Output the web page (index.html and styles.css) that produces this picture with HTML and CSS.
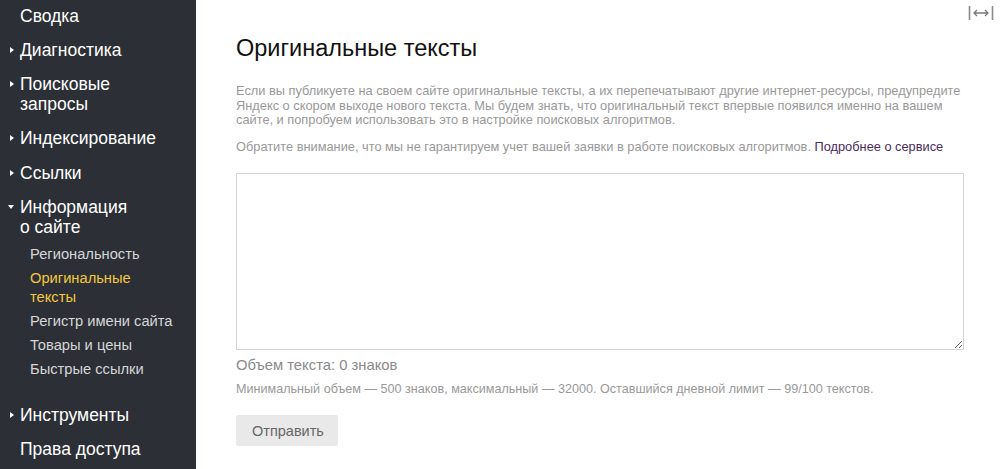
FILE: index.html
```html
<!DOCTYPE html>
<html lang="ru">
<head>
    <meta charset="UTF-8">
    <title>Оригинальные тексты</title>
    <link rel="stylesheet" href="styles.css">
</head>
<body>

    <nav class="sidebar">
        <ul class="menu">
            <li class="menu-item menu-item-first">Сводка</li>
            <li class="menu-item has-arrow">Диагностика</li>
            <li class="menu-item has-arrow">Поисковые<br>запросы</li>
            <li class="menu-item has-arrow">Индексирование</li>
            <li class="menu-item has-arrow">Ссылки</li>
            <li class="menu-item has-arrow open">Информация<br>о сайте</li>
            <li class="submenu">
                <ul>
                    <li>Региональность</li>
                    <li class="active">Оригинальные<br>тексты</li>
                    <li>Регистр имени сайта</li>
                    <li>Товары и цены</li>
                    <li>Быстрые ссылки</li>
                </ul>
            </li>
            <li class="menu-item has-arrow menu-item-tools">Инструменты</li>
            <li class="menu-item">Права доступа</li>
        </ul>
    </nav>

    <main class="content">
        <div class="expand" title="Развернуть">
            <svg width="26" height="16" viewBox="0 0 26 16">
                <path d="M1.5 1v14M24.5 1v14" stroke="#8a8a8a" stroke-width="1.6" fill="none"/>
                <path d="M6 8h14M9 5l-3 3 3 3M17 5l3 3-3 3" stroke="#7a7a7a" stroke-width="1.3" fill="none"/>
            </svg>
        </div>

        <h1>Оригинальные тексты</h1>

        <p class="intro">Если вы публикуете на своем сайте оригинальные тексты, а их перепечатывают другие интернет-ресурсы, предупредите Яндекс о скором выходе нового текста. Мы будем знать, что оригинальный текст впервые появился именно на вашем сайте, и попробуем использовать это в настройке поисковых алгоритмов.</p>

        <p class="intro">Обратите внимание, что мы не гарантируем учет вашей заявки в работе поисковых алгоритмов. <a href="#">Подробнее о сервисе</a></p>

        <textarea class="text-input"></textarea>

        <p class="counter">Объем текста: 0 знаков</p>
        <p class="limits">Минимальный объем — 500 знаков, максимальный — 32000. Оставшийся дневной лимит — 99/100 текстов.</p>

        <button class="submit">Отправить</button>
    </main>

</body>
</html>
```

FILE: styles.css
```css
body {
    font-family: 'Liberation Sans', Arial, sans-serif;
    margin: 0;
    display: flex;
    min-height: 100vh;
    background: #fff;
    overflow: hidden;
}

.sidebar {
    width: 196px;
    flex-shrink: 0;
    background: #2c2f35;
    color: #fff;
}

.menu {
    list-style: none;
    margin: 0;
    padding: 0;
}

.menu-item {
    position: relative;
    font-size: 17.5px;
    line-height: 20px;
    padding: 7px 10px 7.3px 20px;
}

.menu-item-first {
    padding-top: 5.5px;
}

.has-arrow::before {
    content: "";
    position: absolute;
    left: 10px;
    top: 14px;
    border-left: 4px solid #fff;
    border-top: 3px solid transparent;
    border-bottom: 3px solid transparent;
}

.has-arrow.open::before {
    left: 8px;
    top: 15px;
    border-top: 4px solid #fff;
    border-left: 3px solid transparent;
    border-right: 3px solid transparent;
    border-bottom: none;
}

.menu-item-tools {
    margin-top: 17px;
}

.submenu ul {
    list-style: none;
    margin: -2.5px 0 0;
    padding: 0 0 0 30px;
}

.submenu li {
    font-size: 14.7px;
    line-height: 19px;
    padding: 3px 0 2px;
    color: #d6d6d6;
}

.submenu li.active {
    color: #f3c83c;
}

.content {
    position: relative;
    flex: 1;
    padding: 0 36px 0 40px;
}

.expand {
    position: absolute;
    top: 5px;
    right: 6px;
    height: 16px;
}

h1 {
    font-size: 23.5px;
    font-weight: normal;
    color: #111;
    margin: 35px 0 22px;
    line-height: 27px;
}

.intro {
    font-size: 12.8px;
    line-height: 14.5px;
    color: #999;
    margin: 0 0 12px;
    max-width: 735px;
}

.intro a {
    color: #4b2a5c;
    text-decoration: none;
}

.text-input {
    display: block;
    box-sizing: border-box;
    width: 728px;
    height: 177px;
    margin-top: 19px;
    border: 1px solid #d4d4d4;
    resize: vertical;
}

.counter {
    font-size: 14.8px;
    color: #8a8a8a;
    margin: 6px 0 0;
    line-height: 18px;
}

.limits {
    font-size: 12.6px;
    color: #999;
    margin: 7px 0 0;
    line-height: 16px;
}

.submit {
    margin-top: 18px;
    background: #e9e9e9;
    border: none;
    border-radius: 2px;
    padding: 0 16px;
    height: 31px;
    width: 102px;
    font-family: inherit;
    font-size: 14.5px;
    color: #666;
    cursor: pointer;
}
```
